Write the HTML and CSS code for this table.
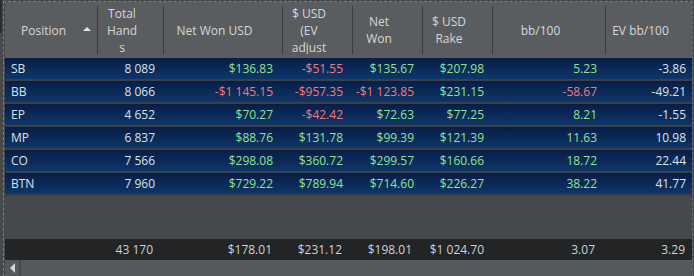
FILE: index.html
```html
<!DOCTYPE html>
<html>
<head>
<meta charset="utf-8">
<link rel="stylesheet" href="styles.css">
</head>
<body>
<div class="page">
  <div class="edge"><div class="edge-bar"></div></div>
  <div class="frame">
    <div class="hdr">
      <div class="hc first"><span>Position</span><span class="sort"></span></div>
      <div class="hc"><span class="ht">Total<br>Hand<br>s</span></div>
      <div class="hc"><span class="ht">Net Won USD</span></div>
      <div class="hc"><span class="ht">$ USD<br>(EV<br>adjust</span></div>
      <div class="hc"><span class="ht">Net<br>Won</span></div>
      <div class="hc"><span class="ht">$ USD<br>Rake</span></div>
      <div class="hc"><span class="ht">bb/100</span></div>
      <div class="hc"><span class="ht">EV bb/100</span></div>
    </div>
    <div class="rows">
      <div class="row"><div class="c pos">SB</div><div class="c">8&nbsp;089</div><div class="c g">$136.83</div><div class="c r">-$51.55</div><div class="c g">$135.67</div><div class="c g">$207.98</div><div class="c g">5.23</div><div class="c w">-3.86</div></div>
      <div class="row"><div class="c pos">BB</div><div class="c">8&nbsp;066</div><div class="c r">-$1&nbsp;145.15</div><div class="c r">-$957.35</div><div class="c r">-$1&nbsp;123.85</div><div class="c g">$231.15</div><div class="c r">-58.67</div><div class="c w">-49.21</div></div>
      <div class="row"><div class="c pos">EP</div><div class="c">4&nbsp;652</div><div class="c g">$70.27</div><div class="c r">-$42.42</div><div class="c g">$72.63</div><div class="c g">$77.25</div><div class="c g">8.21</div><div class="c w">-1.55</div></div>
      <div class="row"><div class="c pos">MP</div><div class="c">6&nbsp;837</div><div class="c g">$88.76</div><div class="c g">$131.78</div><div class="c g">$99.39</div><div class="c g">$121.39</div><div class="c g">11.63</div><div class="c w">10.98</div></div>
      <div class="row"><div class="c pos">CO</div><div class="c">7&nbsp;566</div><div class="c g">$298.08</div><div class="c g">$360.72</div><div class="c g">$299.57</div><div class="c g">$160.66</div><div class="c g">18.72</div><div class="c w">22.44</div></div>
      <div class="row"><div class="c pos">BTN</div><div class="c">7&nbsp;960</div><div class="c g">$729.22</div><div class="c g">$789.94</div><div class="c g">$714.60</div><div class="c g">$226.27</div><div class="c g">38.22</div><div class="c w">41.77</div></div>
    </div>
    <div class="filler"></div>
    <div class="foot">
      <div class="c pos"></div><div class="c">43&nbsp;170</div><div class="c">$178.01</div><div class="c">$231.12</div><div class="c">$198.01</div><div class="c">$1&nbsp;024.70</div><div class="c">3.07</div><div class="c">3.29</div>
    </div>
    <div class="scroll">
      <div class="sbtn"><span class="larrow"></span></div>
      <div class="strack"></div>
    </div>
  </div>
</div>
</body>
</html>
```
FILE: styles.css
```css
* { box-sizing: border-box; }
html, body { margin: 0; padding: 0; }
body {
  background: #46494c;
  font-family: "Open Sans", "Noto Sans", sans-serif;
  font-size: 12px;
  width: 694px;
  height: 276px;
  overflow: hidden;
}
.page {
  display: flex;
  height: 276px;
}
.edge {
  width: 3px;
  flex: none;
  background: #46494c;
}
.edge-bar {
  height: 33px;
  background: #2b2d2f;
  width: 2px;
}
.frame {
  width: 690px;
  margin-top: 1px;
  border-left: 1px dashed #7c7f82;
  border-top: 1px dashed #7c7f82;
  border-right: 1px dashed #6a6d70;
  height: 275px;
  display: flex;
  flex-direction: column;
  padding-left: 1px;
}
.hdr, .row, .foot {
  display: grid;
  grid-template-columns: 92px 66px 119px 70px 70px 70px 113px 87px;
}
.hdr {
  height: 56px;
  background: #5a5d60;
  color: #d6d7d8;
  flex: none;
}
.hc {
  display: flex;
  align-items: center;
  justify-content: center;
  line-height: 17px;
  height: 48px;
  align-self: center;
  border-left: 1px solid #393b3d;
  padding-right: 17px;
  overflow: hidden;
}
.ht {
  display: block;
  flex: 1;
  text-align: center;
}
.hc.first {
  border-left: none;
  justify-content: flex-start;
  padding-left: 16px;
  padding-right: 0;
  gap: 17px;
}
.sort {
  width: 0;
  height: 0;
  border-left: 4px solid transparent;
  border-right: 4px solid transparent;
  border-bottom: 4px solid #e6e6e6;
  margin-top: -2px;
}
.rows {
  display: flex;
  flex-direction: column;
  gap: 2px;
  background: #3d4043;
  padding-bottom: 2px;
  flex: none;
}
.row {
  height: 21px;
  background: linear-gradient(to bottom, #071d48, #0e3668);
  color: #dde1e8;
}
.c {
  display: flex;
  align-items: center;
  justify-content: flex-end;
  padding-right: 8px;
  white-space: nowrap;
}
.c.pos {
  justify-content: flex-start;
  padding-left: 6px;
  padding-right: 0;
}
.c.g { color: #8fe48f; }
.c.r { color: #f27a7a; }
.c.w { color: #dfe2e8; }
.row .c:nth-child(3), .row .c:nth-child(4) { padding-right: 9px; }
.row .c:nth-child(8) { padding-right: 6px; }
.filler {
  flex: 1;
  background: #46494c;
}
.foot {
  height: 21px;
  background: #222426;
  color: #d0d2d4;
  flex: none;
}
.foot .c:nth-child(2) { padding-right: 10px; }
.foot .c:nth-child(3), .foot .c:nth-child(4), .foot .c:nth-child(5) { padding-right: 10px; }
.foot .c:nth-child(7) { padding-right: 10px; }
.foot .c:nth-child(8) { padding-right: 7px; }
.scroll {
  height: 16px;
  background: #55585b;
  display: flex;
  flex: none;
}
.sbtn {
  width: 16px;
  display: flex;
  align-items: center;
  justify-content: center;
  border-right: 2px solid #45484b;
}
.larrow {
  width: 0;
  height: 0;
  border-top: 5px solid transparent;
  border-bottom: 5px solid transparent;
  border-right: 5px solid #d4d5d6;
}
.strack {
  flex: 1;
  background: #56595c;
}
```
